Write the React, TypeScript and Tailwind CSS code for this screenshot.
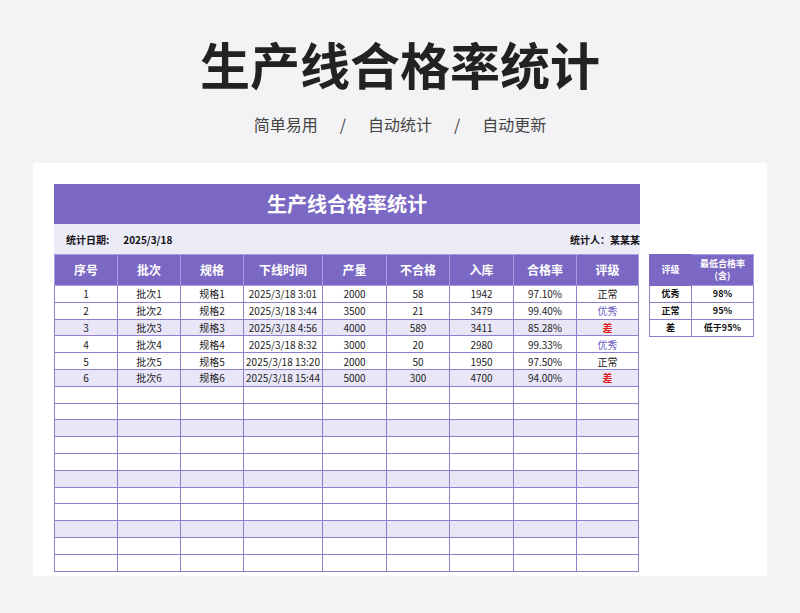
import React from 'react';

const cols = [63, 63, 63, 79, 64, 63, 64, 63, 62];
const heads = ['序号', '批次', '规格', '下线时间', '产量', '不合格', '入库', '合格率', '评级'];
const rows = [
  ['1', '批次1', '规格1', '2025/3/18 3:01', '2000', '58', '1942', '97.10%', '正常'],
  ['2', '批次2', '规格2', '2025/3/18 3:44', '3500', '21', '3479', '99.40%', '优秀'],
  ['3', '批次3', '规格3', '2025/3/18 4:56', '4000', '589', '3411', '85.28%', '差'],
  ['4', '批次4', '规格4', '2025/3/18 8:32', '3000', '20', '2980', '99.33%', '优秀'],
  ['5', '批次5', '规格5', '2025/3/18 13:20', '2000', '50', '1950', '97.50%', '正常'],
  ['6', '批次6', '规格6', '2025/3/18 15:44', '5000', '300', '4700', '94.00%', '差'],
];
while (rows.length < 17) rows.push(['', '', '', '', '', '', '', '', '']);

const gradeColor = (g: string) =>
  g === '优秀' ? 'text-[#6a5bc0]' : g === '差' ? 'text-[#e01a1a] font-bold' : 'text-[#222]';

const App: React.FC = () => {
  return (
    <div className="w-[800px] h-[613px] bg-[#f3f3f5] overflow-hidden" style={{ fontFamily: '"Noto Sans CJK SC", "Noto Sans", sans-serif' }}>
      <div className="flex flex-col items-center pt-[28px]">
        <h1 className="text-[50px] leading-[70px] font-bold text-[#222]">生产线合格率统计</h1>
        <div className="mt-[14px] flex gap-[22px] text-[16px] text-[#444] leading-[24px]">
          <span>简单易用</span><span>/</span><span>自动统计</span><span>/</span><span>自动更新</span>
        </div>
      </div>
      <div className="mx-[33px] mt-[27px] h-[413px] bg-white pt-[21px] pl-[21px] flex gap-[9px]">
        <div className="w-[586px]">
          <div className="h-[40px] bg-[#7b68c4] text-white text-[20px] font-bold flex items-center justify-center">生产线合格率统计</div>
          <div className="h-[30px] bg-[#ecebf8] flex items-center justify-between px-[12px] text-[10px] font-bold text-[#111]">
            <div className="flex gap-[14px]"><span>统计日期:</span><span>2025/3/18</span></div>
            <span className="-mr-[12px]">统计人：某某某</span>
          </div>
          <table className="border-collapse text-[10px] text-[#222] table-fixed">
            <colgroup>{cols.map((w, i) => <col key={i} style={{ width: w }} />)}</colgroup>
            <thead>
              <tr className="h-[31px] bg-[#7b68c4] text-white text-[12px]">
                {heads.map(h => <th key={h} className="border border-[#a99ce0] font-bold">{h}</th>)}
              </tr>
            </thead>
            <tbody>
              {rows.map((r, i) => (
                <tr key={i} className={`h-[16.8px] ${i % 3 === 2 ? 'bg-[#e9e7f7]' : 'bg-white'}`}>
                  {r.map((c, j) => (
                    <td key={j} className={`border border-[#8e80cf] text-center leading-[15px] p-0 ${j === 8 ? gradeColor(c) : ''}`}>{c}</td>
                  ))}
                </tr>
              ))}
            </tbody>
          </table>
        </div>
        <div className="mt-[70px]">
          <table className="border-collapse text-[9px] font-bold text-[#111] table-fixed">
            <colgroup><col style={{ width: 42 }} /><col style={{ width: 62 }} /></colgroup>
            <thead>
              <tr className="h-[31px] bg-[#7b68c4] text-white text-[9px]">
                <th className="border border-[#7b68c4] font-bold">评级</th>
                <th className="border border-[#a99ce0] font-bold leading-[12px] p-0">
                  <div>最低合格率</div><div>(含)</div>
                </th>
              </tr>
            </thead>
            <tbody>
              {[['优秀', '98%'], ['正常', '95%'], ['差', '低于95%']].map(r => (
                <tr key={r[0]} className="h-[17px]">
                  <td className="border border-[#8e80cf] text-center p-0">{r[0]}</td>
                  <td className="border border-[#8e80cf] text-center p-0">{r[1]}</td>
                </tr>
              ))}
            </tbody>
          </table>
        </div>
      </div>
    </div>
  );
};

export default App;
